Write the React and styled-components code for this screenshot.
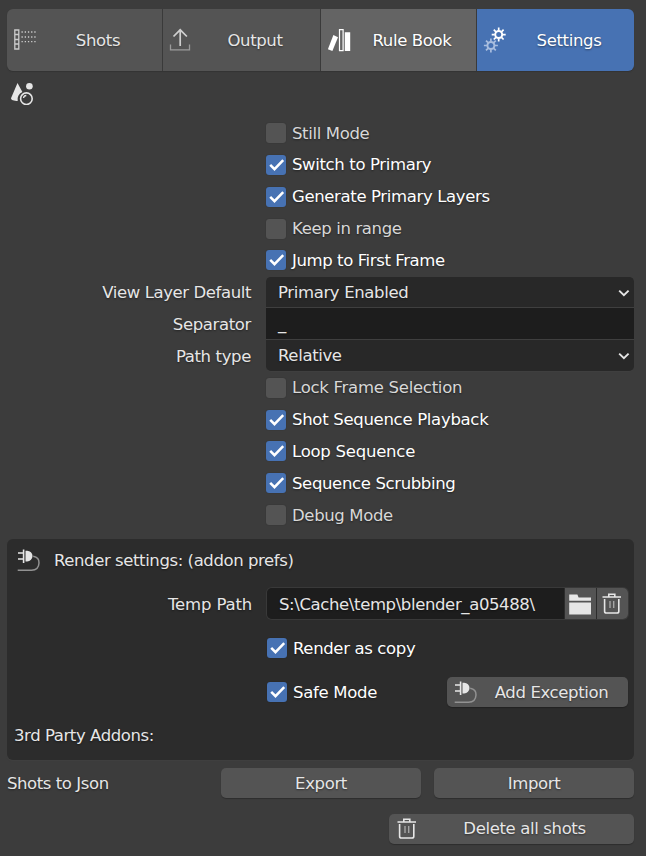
import React from "react";
import styled, { createGlobalStyle, css } from "styled-components";

const GlobalStyle = createGlobalStyle`
  *, *::before, *::after { box-sizing: border-box; }
  html, body { margin: 0; background: #3c3c3c; }
`;

const color = {
  text: "#e6e6e6",
  bright: "#ffffff",
  button: "#545454",
  hover: "#646464",
  accent: "#4772b3",
  field: "#1d1d1d",
  menu: "#282828",
  panel: "#2c2c2c",
};

const Page = styled.main`
  width: 646px;
  height: 856px;
  padding: 9px 12px 0 7px;
  overflow: hidden;
  background: #3c3c3c;
  color: ${color.text};
  font: 16.5px/20px "DejaVu Sans", sans-serif;
  white-space: nowrap;
  svg { display: block; flex: none; }
`;

const Text = styled.span`
  padding-top: 1px;
  letter-spacing: ${(p) => p.$track ?? -0.36}px;
  text-shadow: 0 1px 2px rgba(0, 0, 0, 0.45);
`;

const Tabs = styled.nav`
  display: grid;
  grid-template-columns: 155px 157px 155px 157px;
  gap: 1px;
  height: 62px;
  border-radius: 6px;
  overflow: hidden;
  background: #3a3a3a;
  box-shadow: 0 1px 1px #333;
`;

const tones = {
  normal: css`background: ${color.button}; color: ${color.text};`,
  hover: css`background: ${color.hover}; color: ${color.bright};`,
  active: css`background: ${color.accent}; color: ${color.bright};`,
};

const Tab = styled.button`
  display: grid;
  grid-template-columns: 24px 1fr;
  align-items: center;
  padding: 0 3px 0 6px;
  border: 0;
  font: inherit;
  text-align: center;
  ${(p) => tones[p.$tone || "normal"]}
`;

const SceneTool = styled.div`
  height: 46.2px;
  padding: 9px 0 0 3px;
`;

const Options = styled.section`
  display: grid;
  grid-auto-rows: 31.83px;
  align-items: center;
`;

const CheckRow = styled.div`
  display: flex;
  align-items: center;
  gap: 6px;
  padding-left: ${(p) => (p.$nested ? 0 : 259)}px;
  color: ${(p) => (p.$on ? color.bright : "#d8d8d8")};
`;

const Box = styled.span`
  display: grid;
  place-items: center;
  flex: none;
  width: 20px;
  height: 20px;
  border-radius: 3px;
  background: ${(p) => (p.$on ? color.accent : color.button)};
  box-shadow: 0 0 1px rgba(0, 0, 0, 0.35);
`;

const FieldRow = styled.div`
  display: grid;
  grid-template-columns: 244px 368px;
  column-gap: 15px;
  height: 100%;
  align-items: center;
  text-align: right;
  > ${Text} { padding-top: 2px; }
`;

const Field = styled.div`
  display: flex;
  align-items: center;
  justify-content: space-between;
  height: 100%;
  padding: 0 4px 0 12px;
  background: ${(p) => (p.$menu ? color.menu : color.field)};
  background-clip: padding-box;
  border-bottom: 1px solid #3f3f3f;
  border-top: ${(p) => (p.$first ? "1px solid transparent" : 0)};
  border-radius: ${(p) => (p.$first ? "5px 5px 0 0" : p.$last ? "0 0 5px 5px" : 0)};
`;

const Panel = styled.section`
  height: 221px;
  margin-top: 7.8px;
  padding: 4px 6px 0 7px;
  border-radius: 6px;
  background: ${color.panel};
  box-shadow: 0 1px 1px #404040;
  ${Text} { padding-top: 3px; }
`;

const PanelHeader = styled.header`
  display: flex;
  align-items: center;
  gap: 12px;
  height: 34px;
  margin-bottom: 5px;
  padding-left: 2px;
`;

const PanelRow = styled.div`
  display: grid;
  grid-template-columns: 238px 361px;
  column-gap: 15px;
  align-items: center;
  height: 44px;
  text-align: right;
`;

const PathGroup = styled.div`
  display: grid;
  grid-template-columns: 297px 31px 31px;
  gap: 1px;
  height: 31px;
  border-radius: 5px;
  overflow: hidden;
  text-align: left;
  box-shadow: 0 0 0 1px #393939;
`;

const PathInput = styled.div`
  display: flex;
  align-items: center;
  padding-left: 12px;
  background: ${color.field};
`;

const IconButton = styled.button`
  display: grid;
  place-items: center;
  padding: 0 2px 0 0;
  border: 0;
  background: ${color.button};
  color: ${color.text};
`;

const Split = styled.div`
  display: flex;
  align-items: center;
  justify-content: space-between;
`;

const Button = styled.button`
  display: flex;
  align-items: center;
  gap: 3px;
  width: ${(p) => p.$width}px;
  height: 30px;
  padding: 0 ${(p) => (p.$icon ? 7 : 0)}px 0 ${(p) => (p.$icon ? 6 : 0)}px;
  border: 0;
  border-radius: 5px;
  background: ${color.button};
  color: ${color.text};
  font: inherit;
  box-shadow: 0 1px 1px rgba(0, 0, 0, 0.25);
  ${Text} { flex: 1; text-align: center; }
`;

const PanelNote = styled.div`
  padding-top: 12px;
`;

const JsonRow = styled.div`
  display: grid;
  grid-template-columns: 201px 200px 200px;
  column-gap: 13px;
  align-items: center;
  margin-top: 8px;
  ${Text} { padding-top: 3px; }
`;

const Footer = styled.footer`
  display: flex;
  justify-content: flex-end;
  margin-top: 16px;
`;

const ShotsIcon = () => (
  <svg width="24" height="24" fill="none" stroke="#ccc">
    <path d="M1.8 2h4v19h-4zM1.5 6.5h4.5M1.5 11.5h4.5M1.5 16h4.5" strokeWidth="1.3" />
    <path d="M8.5 4h15M8.5 9h15M8.5 13.7h15" strokeWidth="1.3" strokeDasharray="1.3 1.9" />
  </svg>
);

const OutputIcon = () => (
  <svg width="24" height="24" fill="none" stroke="#cfcfcf" strokeWidth="1.7">
    <path d="M11.2 18V2M4.5 8.5l6.7-6.7 6.7 6.7" />
    <path d="M1.5 16.5v5.3h19v-5.3" stroke="#9b9b9b" strokeWidth="1.3" />
  </svg>
);

const BooksIcon = () => (
  <svg width="24" height="24" fill="#fff">
    <path d="M6.4 7l4.6 2.2L5.4 23l-4.5-1.8z" />
    <path d="M12.5 1.7h3.6v21h-3.6z" fill="none" stroke="#fff" strokeWidth="1.2" />
    <path d="M17.8 4.3h5.4v18.8h-5.4z" />
  </svg>
);

const Gear = ({ x, y, tone }) => (
  <g transform={`translate(${x} ${y})`} stroke={tone} fill="none">
    <circle r="3.5" strokeWidth="2" />
    <path
      d="M0-4v-3M0 4v3M-4 0h-3M4 0h3M2.8-2.8l2.1-2.1M-2.8-2.8l-2.1-2.1M2.8 2.8l2.1 2.1M-2.8 2.8l-2.1 2.1"
      strokeWidth="1.7"
    />
  </g>
);

const GearsIcon = () => (
  <svg width="24" height="28">
    <Gear x={15.7} y={8.6} tone="#fff" />
    <Gear x={7.9} y={19.5} tone="#a9bedf" />
  </svg>
);

const SceneIcon = () => (
  <svg width="25" height="25" fill="#e6e6e6">
    <path d="M7.5 3L1 18.3c0 1.7 3.1 2.8 6.7 2.8a8 8 0 0 1 4.7-9.2z" />
    <circle cx="19.4" cy="6.3" r="3.3" />
    <circle cx="16.4" cy="18.7" r="5.8" fill="none" stroke="#e6e6e6" strokeWidth="1.6" />
    <path d="M13.5 18a3 3 0 0 1 2.8-2.5" fill="none" stroke="#e6e6e6" strokeWidth="1.3" />
  </svg>
);

const PlugIcon = () => (
  <svg width="26" height="26" fill="none" stroke="#e6e6e6">
    <path d="M7.6 2.5v13.5M2 6h5M2 12h5" strokeWidth="1.6" />
    <path d="M9.5 3.8h1.7a5.3 5.3 0 0 1 0 10.6H9.5z" fill="#e6e6e6" stroke="none" />
    <path d="M17.2 9.2c4 .7 6 3.4 5.8 6.8-.2 4.5-3.1 7.2-7.5 7.2H1.7" stroke="#929292" strokeWidth="1.5" />
  </svg>
);

const FolderIcon = () => (
  <svg width="24" height="24" fill="#e6e6e6">
    <path d="M1.2 2.6h8.2l1.2 2.8h12.4v3.4h-21.8zM1.2 10.4h21.8v12.2h-21.8z" />
  </svg>
);

const TrashIcon = () => (
  <svg width="24" height="24" fill="none" stroke="#e6e6e6" strokeWidth="1.6">
    <path d="M2.5 5h18.5M8.8 5V2.2h6V5" />
    <path d="M4.6 7v12.2q0 1.8 1.8 1.8h10.6q1.8 0 1.8-1.8V7" />
    <path d="M10 9v7M13.7 9v7" stroke="#a5a5a5" strokeWidth="1.4" />
  </svg>
);

const Chevron = () => (
  <svg width="12" height="12" fill="none" stroke="#e6e6e6" strokeWidth="1.9">
    <path d="M1.2 4.6l4.7 4.6 4.7-4.6" />
  </svg>
);

const Check = ({ label, on, nested, track }) => (
  <CheckRow $on={on} $nested={nested}>
    <Box $on={on}>
      {on && (
        <svg width="20" height="20" fill="none" stroke="#fff" strokeWidth="2.5">
          <path d="M4.2 9.8l4.3 4.4 8.7-9" />
        </svg>
      )}
    </Box>
    <Text $track={track}>{label}</Text>
  </CheckRow>
);

const Property = ({ label, value, menu, first, last, track }) => (
  <FieldRow>
    <Text $track={track}>{label}</Text>
    <Field $menu={menu} $first={first} $last={last}>
      <Text>{value}</Text>
      {menu && <Chevron />}
    </Field>
  </FieldRow>
);

export default function App() {
  return (
    <>
      <GlobalStyle />
      <Page>
        <Tabs>
          <Tab><ShotsIcon /><Text>Shots</Text></Tab>
          <Tab><OutputIcon /><Text>Output</Text></Tab>
          <Tab $tone="hover"><BooksIcon /><Text>Rule Book</Text></Tab>
          <Tab $tone="active"><GearsIcon /><Text>Settings</Text></Tab>
        </Tabs>
        <SceneTool><SceneIcon /></SceneTool>
        <Options>
          <Check label="Still Mode" />
          <Check label="Switch to Primary" on />
          <Check label="Generate Primary Layers" on />
          <Check label="Keep in range" track={-0.36} />
          <Check label="Jump to First Frame" on track={-0.4} />
          <Property label="View Layer Default" value="Primary Enabled" menu first track={-0.4} />
          <Property label="Separator" value="_" />
          <Property label="Path type" value="Relative" menu last />
          <Check label="Lock Frame Selection" track={-0.27} />
          <Check label="Shot Sequence Playback" on track={-0.3} />
          <Check label="Loop Sequence" on track={-0.24} />
          <Check label="Sequence Scrubbing" on />
          <Check label="Debug Mode" track={-0.36} />
        </Options>
        <Panel>
          <PanelHeader>
            <PlugIcon />
            <Text $track={-0.41}>Render settings: (addon prefs)</Text>
          </PanelHeader>
          <PanelRow>
            <Text $track={-0.16}>Temp Path</Text>
            <PathGroup>
              <PathInput><Text $track={-0.38}>{"S:\\Cache\\temp\\blender_a05488\\"}</Text></PathInput>
              <IconButton aria-label="Browse"><FolderIcon /></IconButton>
              <IconButton aria-label="Clear"><TrashIcon /></IconButton>
            </PathGroup>
          </PanelRow>
          <PanelRow>
            <span />
            <Check label="Render as copy" on nested />
          </PanelRow>
          <PanelRow>
            <span />
            <Split>
              <Check label="Safe Mode" on nested track={-0.3} />
              <Button $width={181} $icon><PlugIcon /><Text>Add Exception</Text></Button>
            </Split>
          </PanelRow>
          <PanelNote><Text $track={-0.42}>3rd Party Addons:</Text></PanelNote>
        </Panel>
        <JsonRow>
          <Text $track={-0.42}>Shots to Json</Text>
          <Button $width={200}><Text>Export</Text></Button>
          <Button $width={200}><Text>Import</Text></Button>
        </JsonRow>
        <Footer>
          <Button $width={245} $icon><TrashIcon /><Text>Delete all shots</Text></Button>
        </Footer>
      </Page>
    </>
  );
}
